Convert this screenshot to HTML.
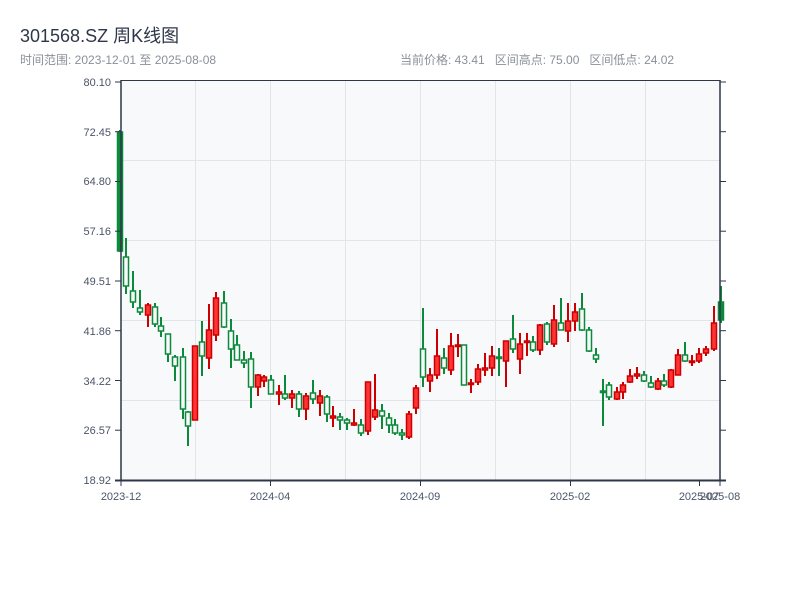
<!DOCTYPE html>
<html><head><meta charset="utf-8">
<style>
body{margin:0;width:800px;height:600px;background:#fff;font-family:"Liberation Sans","Noto Sans CJK SC",sans-serif;overflow:hidden;position:relative}
.t{position:absolute;left:20px;top:22px;font-size:18px;color:#2d3748}
.s{position:absolute;left:20px;top:51px;font-size:12px;color:#8a9099}
.r{position:absolute;left:400px;top:51px;font-size:12px;color:#8a9099;word-spacing:0}
svg{position:absolute;left:0;top:0}
</style></head><body>
<div class="t">301568.SZ 周K线图</div>
<div class="s">时间范围: 2023-12-01 至 2025-08-08</div>
<div class="r">当前价格: 43.41&nbsp;&nbsp; 区间高点: 75.00&nbsp;&nbsp; 区间低点: 24.02</div>
<svg width="800" height="600" id="sv" font-family="Liberation Sans, sans-serif" font-size="11">
<rect x="121" y="81" width="599" height="399" fill="#f7f9fb"/>
<g stroke="#e1e4e8" stroke-width="1">
<line x1="195.5" y1="81" x2="195.5" y2="480"/><line x1="270.5" y1="81" x2="270.5" y2="480"/>
<line x1="345.5" y1="81" x2="345.5" y2="480"/><line x1="420.5" y1="81" x2="420.5" y2="480"/>
<line x1="495.5" y1="81" x2="495.5" y2="480"/><line x1="570.5" y1="81" x2="570.5" y2="480"/>
<line x1="645.5" y1="81" x2="645.5" y2="480"/>
<line x1="121" y1="160.5" x2="720" y2="160.5"/><line x1="121" y1="240.5" x2="720" y2="240.5"/>
<line x1="121" y1="320.5" x2="720" y2="320.5"/><line x1="121" y1="400.5" x2="720" y2="400.5"/>
</g>
<g id="c"></g>
<g stroke="#2d3748" stroke-width="1.5" fill="none">
<line x1="121" y1="80.5" x2="720" y2="80.5" stroke-width="1"/>
<line x1="121" y1="80" x2="121" y2="481"/>
<line x1="720" y1="80" x2="720" y2="481"/>
<line x1="115" y1="480.5" x2="726" y2="480.5" stroke-width="2"/>
<g stroke-width="1">
<line x1="115" y1="82" x2="121" y2="82"/><line x1="115" y1="131.7" x2="121" y2="131.7"/><line x1="115" y1="181.5" x2="121" y2="181.5"/><line x1="115" y1="231.2" x2="121" y2="231.2"/><line x1="115" y1="281" x2="121" y2="281"/><line x1="115" y1="330.7" x2="121" y2="330.7"/><line x1="115" y1="380.5" x2="121" y2="380.5"/><line x1="115" y1="430.2" x2="121" y2="430.2"/>
<line x1="720" y1="82" x2="726" y2="82"/><line x1="720" y1="131.7" x2="726" y2="131.7"/><line x1="720" y1="181.5" x2="726" y2="181.5"/><line x1="720" y1="231.2" x2="726" y2="231.2"/><line x1="720" y1="281" x2="726" y2="281"/><line x1="720" y1="330.7" x2="726" y2="330.7"/><line x1="720" y1="380.5" x2="726" y2="380.5"/><line x1="720" y1="430.2" x2="726" y2="430.2"/>
<line x1="121" y1="480" x2="121" y2="486"/><line x1="270.5" y1="480" x2="270.5" y2="486"/><line x1="420.5" y1="480" x2="420.5" y2="486"/><line x1="570.5" y1="480" x2="570.5" y2="486"/><line x1="699.5" y1="480" x2="699.5" y2="486"/><line x1="720" y1="480" x2="720" y2="486"/>
</g></g>
<g fill="#4a5568" text-anchor="end">
<text x="111" y="86">80.10</text><text x="111" y="136">72.45</text><text x="111" y="185">64.80</text><text x="111" y="235">57.16</text><text x="111" y="285">49.51</text><text x="111" y="335">41.86</text><text x="111" y="385">34.22</text><text x="111" y="434">26.57</text><text x="111" y="484">18.92</text>
</g>
<g fill="#4a5568" text-anchor="middle">
<text x="121" y="500">2023-12</text><text x="270" y="500">2024-04</text><text x="420" y="500">2024-09</text><text x="570" y="500">2025-02</text><text x="699" y="500">2025-07</text><text x="720" y="500">2025-08</text>
</g>
</svg>
<script>
var d=[
[120,132,251,130,252,'gf'],[126,257,286,238,294,'g'],[133,291,302,271,308,'g'],[140,308,312,290,315,'g'],[148,305,315,303,327,'r'],
[155,307,324,303,327,'g'],[161,326,331,317,337,'g'],[168,334,354,334,362,'g'],[175,357,366,355,381,'g'],[183,357,409,348,419,'g'],
[188,412,426,411,446,'g'],[195,346,420,346,420,'r'],[202,342,356,321,376,'g'],[209,330,358,304,369,'r'],[216,298,335,292,341,'r'],
[224,303,327,291,328,'g'],[231,331,349,319,368,'g'],[237,345,360,335,360,'g'],[244,360,363,351,368,'g'],[251,359,387,352,408,'g'],
[258,375,387,374,396,'r'],[264,377,381,375,387,'r'],[271,380,394,375,394,'g'],[279,392,394,385,405,'r'],[285,394,398,375,400,'g'],
[292,394,398,390,408,'r'],[299,394,409,391,417,'g'],[306,396,409,393,420,'r'],[313,393,399,380,404,'g'],[320,396,403,390,416,'r'],
[327,397,414,395,422,'g'],[333,416,418,406,427,'r'],[340,417,420,413,430,'g'],[347,420,423,418,430,'g'],[354,423,425,409,426,'r'],
[361,425,433,419,436,'g'],[368,382,431,382,435,'r'],[375,410,417,374,420,'r'],[382,411,416,404,429,'g'],[389,418,425,413,433,'g'],
[395,425,433,419,435,'g'],[402,433,435,429,440,'g'],[409,414,437,411,439,'r'],[416,388,408,385,414,'r'],[423,349,377,308,387,'g'],
[430,375,381,368,392,'r'],[437,356,375,329,379,'r'],[444,358,368,348,374,'g'],[451,346,370,333,375,'r'],[458,345,346,334,357,'r'],
[464,345,385,345,385,'g'],[471,383,384,379,393,'r'],[478,369,382,364,385,'r'],[485,368,370,353,376,'r'],[492,356,368,346,376,'r'],
[499,357,358,348,376,'g'],[506,341,361,341,387,'r'],[513,339,349,315,353,'g'],[520,344,359,333,374,'r'],[527,341,342,333,356,'r'],
[533,342,350,336,352,'g'],[540,325,350,324,355,'r'],[547,324,342,322,345,'g'],[554,320,344,305,347,'r'],[561,323,330,298,330,'g'],
[568,321,331,303,342,'r'],[575,312,321,303,331,'r'],[582,309,330,293,331,'g'],[589,330,351,327,352,'g'],[596,355,359,348,363,'g'],
[603,391,392,379,426,'g'],[609,385,397,382,400,'g'],[617,392,399,387,400,'r'],[623,385,392,382,399,'r'],[630,376,382,369,383,'r'],
[637,374,376,367,379,'r'],[644,375,381,371,382,'g'],[651,383,387,376,388,'g'],[658,381,389,378,390,'r'],[664,381,385,374,387,'g'],
[671,370,387,369,388,'r'],[678,355,375,349,375,'r'],[685,355,361,342,362,'g'],[692,361,362,355,366,'r'],[699,354,361,348,363,'r'],
[706,349,353,346,356,'r'],[714,323,349,306,351,'r'],[721,302,320,286,323,'gf']];
var s='';
d.forEach(function(c){var x=c[0],t=c[1],b=c[2],ht=c[3],hb=c[4],k=c[5];
var st=k=='r'?'#cc0000':'#0a8a3a';var f=k=='r'?'#ff3333':(k=='gf'?'#0a8a3a':'#f7f9fb');
s+='<line x1="'+x+'" y1="'+ht+'" x2="'+x+'" y2="'+hb+'" stroke="'+st+'" stroke-width="2"/>';
var h=Math.max(b-t,1.5);
s+='<rect x="'+(x-2.5)+'" y="'+t+'" width="5" height="'+h+'" fill="'+f+'" stroke="'+st+'" stroke-width="1.5"/>';});
document.getElementById('c').innerHTML=s;
</script>
</body></html>
